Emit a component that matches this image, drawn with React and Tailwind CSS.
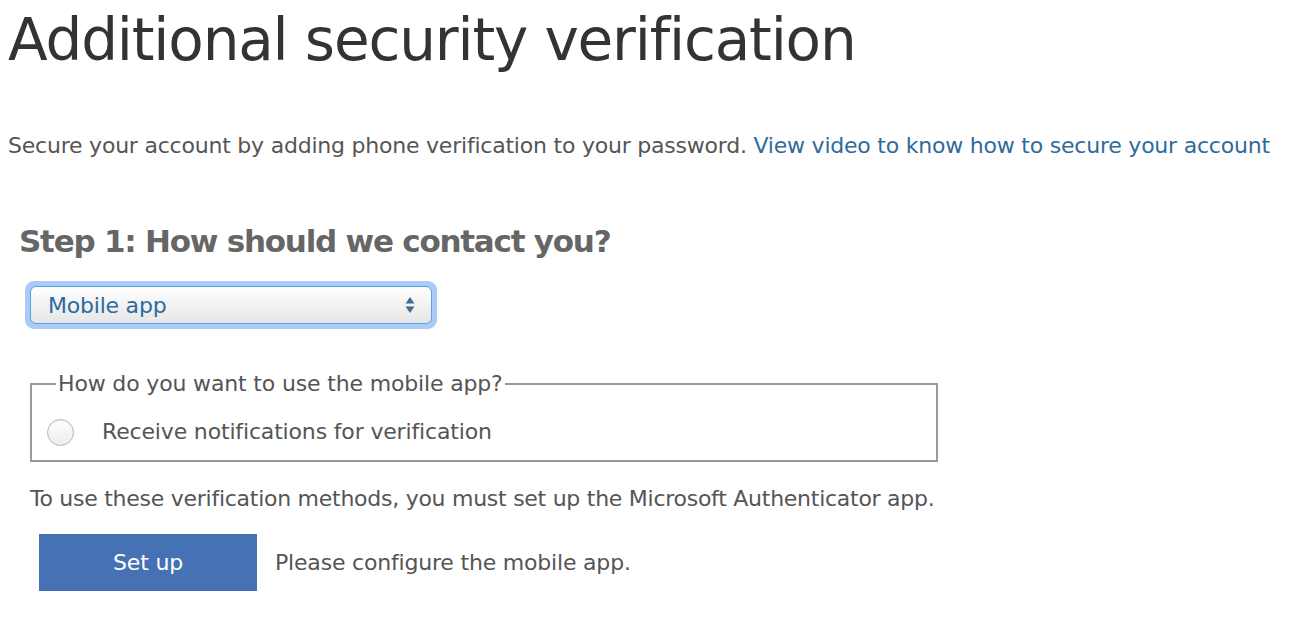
import React from 'react';

const App = () => {
  return (
    <div className="min-h-screen bg-white text-[#555] font-['DejaVu_Sans',sans-serif]">
      <h1 className="pl-2 pt-1 text-[58px] leading-[72px] text-[#333] tracking-[-0.02em]">
        Additional security verification
      </h1>

      <p className="mt-[55px] pl-2 text-[22px] leading-[30px] tracking-[-0.01em]">
        Secure your account by adding phone verification to your password.{' '}
        <a href="#" className="text-[#2f6b9c]">View video to know how to secure your account</a>
      </p>

      <div className="pl-[19px] mt-[60px]">
        <h2 className="text-[31px] leading-[40px] font-bold text-[#666] tracking-[-0.04em]">
          Step 1: How should we contact you?
        </h2>

        <div className="mt-[20px] ml-[6px] w-[412px] rounded-[9px] bg-[#a9cbf5] p-[5px]">
          <div className="flex h-[38px] items-center justify-between rounded-[6px] border border-[#5aa2e0] bg-gradient-to-b from-white to-[#e6e6e6] pl-[17px] pr-[16px]">
            <span className="text-[22px] text-[#2f6b9c] tracking-[-0.01em]">Mobile app</span>
            <svg width="10" height="20" viewBox="0 0 10 20">
              <path d="M5 2 L9.5 8.5 L0.5 8.5 Z" fill="#3f6d91" />
              <path d="M5 18 L9.5 11.5 L0.5 11.5 Z" fill="#3f6d91" />
            </svg>
          </div>
        </div>

        <fieldset className="mt-[42px] ml-[11px] w-[908px] border-2 border-[#999] px-[15px] pb-[13px] tracking-[-0.01em]">
          <legend className="px-[2px] text-[22px] leading-[26px] ml-[9px]">
            How do you want to use the mobile app?
          </legend>
          <label className="mt-[20px] flex items-center">
            <span className="h-[27px] w-[27px] rounded-full border border-[#b5b5b5] bg-gradient-to-b from-white to-[#ececec] shadow-[inset_0_1px_1px_rgba(0,0,0,0.08)]" />
            <span className="ml-[28px] text-[22px] leading-[30px]">
              Receive notifications for verification
            </span>
          </label>
        </fieldset>

        <p className="mt-[22px] ml-[11px] text-[22px] leading-[30px] tracking-[-0.012em]">
          To use these verification methods, you must set up the Microsoft Authenticator app.
        </p>

        <div className="mt-[20px] ml-[20px] flex items-center tracking-[-0.012em]">
          <button className="h-[57px] w-[218px] bg-[#4672b5] text-[22px] text-white">
            Set up
          </button>
          <span className="ml-[18px] text-[22px]">Please configure the mobile app.</span>
        </div>
      </div>
    </div>
  );
};

export default App;
